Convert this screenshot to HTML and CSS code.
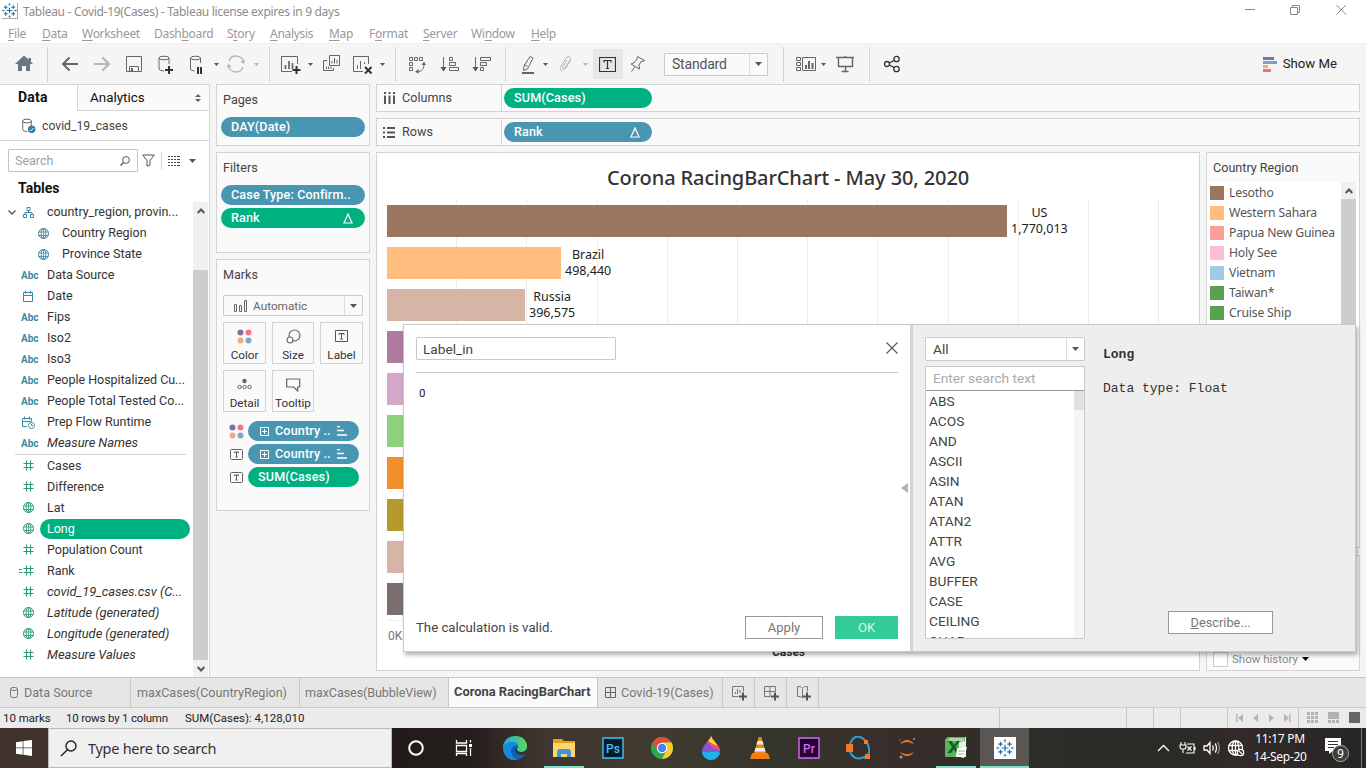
FILE: index.html
```html
<!DOCTYPE html>
<html lang="en">
<head>
<meta charset="utf-8">
<title>Tableau - Covid-19(Cases)</title>
<link rel="stylesheet" href="styles.css">
</head>
<body>
<svg class="defs" aria-hidden="true">
  <symbol id="globe" viewBox="0 0 13 13"><g fill="none" stroke="currentColor"><circle cx="6.5" cy="6.5" r="5"/><ellipse cx="6.5" cy="6.5" rx="2.3" ry="5"/><path d="M1.5 5h10M1.5 8.5h10M6.5 1.5v10" stroke-width=".8"/></g></symbol>
  <symbol id="hash" viewBox="0 0 13 13"><path d="M4.5 1.5v10M8.5 1.5v10M1.500 4.500h10M1.500 8.500h10" stroke="currentColor" stroke-width="1.1" fill="none"/></symbol>
  <symbol id="cal" viewBox="0 0 13 13"><path d="M1.500 2.500h9v9h-9zM1.500 5.500h9M3.500 .5v3M8.500 .5v3" stroke="currentColor" fill="none"/></symbol>
  <symbol id="tbox" viewBox="0 0 13 11"><rect x=".5" y=".5" width="12" height="10" rx="1" fill="none" stroke="#666"/><path d="M4.500 4V3h4v1M6.500 3v5M5.500 8h2" fill="none" stroke="#555"/></symbol>
  <symbol id="dots4" viewBox="0 0 15 15"><circle cx="3.500" cy="3.500" r="3" fill="#83709a"/><circle cx="11.500" cy="3.500" r="3" fill="#fa7286"/><circle cx="3.500" cy="11.500" r="3" fill="#f3a77b"/><circle cx="11.500" cy="11.500" r="3" fill="#83a4cc"/></symbol>
  <symbol id="delta" viewBox="0 0 10 11"><path d="M5 1L9 10H1z" fill="none" stroke="#fff" stroke-width="1.2"/></symbol>
  <symbol id="plusbox" viewBox="0 0 9 9"><path d="M.5.5h8v8h-8zM4.500 2v5M2 4.500h5" fill="none" stroke="#fff"/></symbol>
  <symbol id="sorted" viewBox="0 0 10 10"><path d="M0 .5h3M0 4.500h7M0 9h10" stroke="#fff" stroke-width="1.600" fill="none"/></symbol>
  <symbol id="caret" viewBox="0 0 7 4"><path d="M0 0h7L3.500 4z" fill="currentColor"/></symbol>
  <symbol id="tableau" viewBox="0 0 16 16"><g fill="none"><path d="M8 0v3M6.800 1.500h2.400M8 13v3M6.800 14.500h2.400M0 8h3M1.500 6.800v2.400M13 8h3M14.500 6.800v2.400" stroke="#5b97b8"/><path d="M4 2.500v4M2 4.500h4M12 2.500v4M10 4.500h4M4 9.500v4M2 11.500h4M12 9.500v4M10 11.500h4M8 5v6M5 8h6" stroke="#1f6ea8" stroke-width="1.100"/></g></symbol>
</svg>

<header class="titlebar">
  <svg class="app-icon" viewBox="0 0 16 16"><use href="#tableau"/></svg>
  <span class="app-title">Tableau - Covid-19(Cases) - Tableau license expires in 9 days</span>
  <svg class="winctl" width="110" height="12" viewBox="0 0 110 12" fill="none" stroke="#8a8a8a"><path d="M1 5.500h10M46.500 3.500h7v7h-7zM48.500 3.500v-2h7v7h-2M92.500 1l9.500 9.500M102 1l-9.500 9.500"/></svg>
</header>
<nav class="menu">
  <span><u>F</u>ile</span><span><u>D</u>ata</span><span><u>W</u>orksheet</span><span>Dash<u>b</u>oard</span><span>S<u>t</u>ory</span><span><u>A</u>nalysis</span><span><u>M</u>ap</span><span>F<u>o</u>rmat</span><span><u>S</u>erver</span><span>Wi<u>n</u>dow</span><span><u>H</u>elp</span>
</nav>

<div class="toolbar">
  <svg class="ic m12" viewBox="0 0 24 24"><path d="M12 3.500L3 12h3v7h4v-5h4v5h4v-7h3l-2-2V6h-2.500v1.600z" fill="#6b7684" stroke="none"/></svg>
  <i class="sep m11"></i>
  <svg class="ic m10" viewBox="0 0 24 24"><path d="M20 12H5M11.500 5.500L5 12l6.500 6.500" stroke-width="2"/></svg>
  <svg class="ic m8 dim" viewBox="0 0 24 24"><path d="M4 12h15M12.500 5.500L19 12l-6.500 6.500" stroke-width="2"/></svg>
  <svg class="ic m8" viewBox="0 0 24 24"><path d="M4.500 4.500h15v15h-15zM7.500 19.500v-5h9v5"/><path d="M9 16h2v3H9z" fill="#666" stroke="none"/></svg>
  <svg class="ic m7" viewBox="0 0 24 24"><ellipse cx="11" cy="6" rx="5" ry="1.800"/><path d="M6 6v11c0 1.200 2 1.800 5 1.800M16 6v6"/><path d="M16 14v8M12 18h8" stroke="#333" stroke-width="2"/></svg>
  <svg class="ic m8" viewBox="0 0 24 24"><ellipse cx="10.500" cy="6" rx="5" ry="1.800"/><path d="M5.500 6v11c0 1.200 2 1.800 4 1.800M15.500 6v5"/><path d="M13 15v7M16 15v7" stroke="#333" stroke-width="2"/></svg>
  <svg class="caret m4"><use href="#caret"/></svg>
  <svg class="ic m4 dim" viewBox="0 0 24 24"><path d="M5 9a7.500 7.500 0 0 1 14.500 1.500M19 15A7.500 7.500 0 0 1 4.500 13.500" stroke-width="1.300"/><path d="M20.500 7.500v4.500l-4-2zM3.500 16.500V12l4 2z" fill="#b5b5b5" stroke="none"/></svg>
  <svg class="caret m5 dim"><use href="#caret"/></svg>
  <i class="sep m9"></i>
  <svg class="ic m9" viewBox="0 0 24 24"><path d="M18.500 12V4.500h-16v15H13"/><path d="M6.500 13v4M10 9v8M13.500 11v6" stroke-width="1.700"/><path d="M17.500 14v8M13.500 18h8" stroke="#333" stroke-width="2"/></svg>
  <svg class="caret m4"><use href="#caret"/></svg>
  <svg class="ic m5" viewBox="0 0 24 24"><path d="M10.500 3.500h10v10h-10zM8 8.500H4.500v10h10V16M13 9v2.500M15.500 6v5.500M18 8v3.500M7.500 14.500V17M9.500 14.500V17M12 14.500V17" /></svg>
  <svg class="ic m7" viewBox="0 0 24 24"><path d="M18.500 12V4.500h-15v15H13M7.500 13v4M10.500 9v8M14.500 10v2"/><path d="M15 15l6.500 6.500M21.500 15L15 21.500" stroke="#333" stroke-width="2"/></svg>
  <svg class="caret m5"><use href="#caret"/></svg>
  <i class="sep m9"></i>
  <svg class="ic m9" viewBox="0 0 24 24"><path d="M4.500 5.500h3v3h-3zM9.500 5.500h3v3h-3zM14.500 5.500h3v3h-3zM4.500 10.500h3v3h-3zM4.500 15.500h3v3h-3zM19 12c0 5-2 7.500-7 8"/><path d="M16.500 13L19 9.500l2 3.500zM13.500 17l-3.500 2.700 3.500 2z" fill="#666" stroke="none"/></svg>
  <svg class="ic m9" viewBox="0 0 24 24"><path d="M5.500 5v13M11.500 5.500h3v3h-3zM11.500 10.500h6v3h-6zM11.500 15.500h9v3h-9z"/><path d="M2.500 15h6l-3 4.500z" fill="#555" stroke="none"/></svg>
  <svg class="ic m8" viewBox="0 0 24 24"><path d="M5.500 5v13M10.500 5.500h10v3h-10zM10.500 10.500h6v3h-6zM10.500 15.500h3v3h-3z"/><path d="M2.500 15h6l-3 4.500z" fill="#555" stroke="none"/></svg>
  <i class="sep m11"></i>
  <svg class="ic m10" viewBox="0 0 24 24"><path d="M14 4.500l3 1.500-5.500 11-4 1.500.5-4.500zM8.500 12.500l3 2"/><path d="M6 21h12" stroke-width="2"/></svg>
  <svg class="caret m2"><use href="#caret"/></svg>
  <svg class="ic m4 dim" viewBox="0 0 24 24"><path d="M17 8l-6 9.500c-1.500 2-5 .5-3.500-2.500l5.500-9c2-2.500 6-.5 4.500 2.500L12 17M14 8l-4 6.500c-1 1.500 0 2.500 1 1.500"/></svg>
  <svg class="caret m5 dim"><use href="#caret"/></svg>
  <span class="pressed m4"><svg width="17" height="15" viewBox="0 0 17 15"><path d="M.5.500h16v14H.5zM5 5.500v-2h7v2M8.500 3.500v8M7 11.500h3" fill="none" stroke="#333" stroke-width="1.200"/></svg></span>
  <svg class="ic m2" viewBox="0 0 24 24"><path d="M12.500 4.500l7 4-1.500 1-1.500-.5-2.500 4 .5 4-8.500-5 3.500-1.500L12 7zM10 14.500l-3.500 5"/></svg>
  <span class="select std m15"><b>Standard</b><em><svg class="caret"><use href="#caret"/></svg></em></span>
  <i class="sep m15"></i>
  <svg class="ic m10" viewBox="0 0 24 24"><path d="M2.500 5.500h4v3h-4zM2.500 10.500h4v3h-4zM2.500 15.500h4v3h-4zM8.500 5.500h13v13h-13z"/><path d="M12 13v4M15 9v8M18.500 11v6" stroke-width="2"/></svg>
  <svg class="caret m2"><use href="#caret"/></svg>
  <svg class="ic m6" viewBox="0 0 24 24"><path d="M3 5.500h18M5.500 5.500v9h14v-9M12 4v2M12.500 14.500v5M8.500 19.500h7" stroke-width="1.400"/></svg>
  <i class="sep m12"></i>
  <svg class="ic m10 dark" viewBox="0 0 24 24"><circle cx="7" cy="12" r="2.500"/><circle cx="16.500" cy="7" r="2.700"/><circle cx="16.500" cy="17" r="2.700"/><path d="M9.500 11l4.500-2.500M9.500 13l4.500 2.500"/></svg>
  <span class="showme"><svg width="14" height="15"><path d="M0 0h11v3H0z" fill="#83709a"/><path d="M0 4h14v3H0z" fill="#7f9fc9"/><path d="M0 8h5v3H0z" fill="#f3a77b"/><path d="M0 12h8v3H0z" fill="#fa6a80"/></svg>Show Me</span>
</div>

<main class="work">
  <aside class="data">
    <div class="dtabs"><b>Data</b><span>Analytics<svg width="6" height="8" viewBox="0 0 6 8"><path d="M3 0l3 3H0zM0 5h6L3 8z" fill="#56677a"/></svg></span></div>
    <div class="source"><svg width="14" height="16" viewBox="0 0 14 16"><g fill="none" stroke="#666"><ellipse cx="5" cy="3" rx="4.300" ry="1.900"/><path d="M.7 3v8.500c0 1.200 2 2 4.500 2M9.300 3v5"/></g><circle cx="9.700" cy="11.300" r="3.700" fill="#2e7d9e"/><path d="M8 11.500l1.300 1.300 2.300-2.800" stroke="#fff" fill="none"/></svg>covid_19_cases</div>
    <div class="find">
      <label>Search<svg width="10" height="10" viewBox="0 0 10 10" fill="none" stroke="#555"><circle cx="6" cy="4" r="3.400"/><path d="M3.500 6.500L.5 9.500" stroke-width="1.400"/></svg></label>
      <svg width="13" height="13" viewBox="0 0 13 13" fill="none" stroke="#555"><path d="M.7 1h11.600L8 6.500V11l-3 1.200V6.500z"/></svg>
      <i></i>
      <svg width="12" height="10" viewBox="0 0 12 10"><path d="M0 .5h12M0 3.500h12M0 6.500h12M0 9.500h12" stroke="#444" stroke-dasharray="2 1 2 1 2 1 3"/></svg>
      <svg class="caret"><use href="#caret"/></svg>
    </div>
    <h2>Tables</h2>
    <div class="treewrap">
      <div class="tree">
        <div class="row top"><svg class="chev" width="8" height="5" viewBox="0 0 8 5"><path d="M.5.500L4 4l3.500-3.500" fill="none" stroke="#555" stroke-width="1.400"/></svg><svg class="fi" viewBox="0 0 13 13"><path d="M5 1.500h3v3H5zM1.500 8.500h3v3h-3zM8.500 8.500h3v3h-3zM6.500 4.500v2M3 8V6.500h7V8" fill="none" stroke="currentColor"/></svg><span>country_region, provin...</span></div>
        <div class="row sub"><svg class="fi"><use href="#globe"/></svg><span>Country Region</span></div>
        <div class="row sub"><svg class="fi"><use href="#globe"/></svg><span>Province State</span></div>
        <div class="row"><b>Abc</b><span>Data Source</span></div>
        <div class="row"><svg class="fi"><use href="#cal"/></svg><span>Date</span></div>
        <div class="row"><b>Abc</b><span>Fips</span></div>
        <div class="row"><b>Abc</b><span>Iso2</span></div>
        <div class="row"><b>Abc</b><span>Iso3</span></div>
        <div class="row"><b>Abc</b><span>People Hospitalized Cu...</span></div>
        <div class="row"><b>Abc</b><span>People Total Tested Co...</span></div>
        <div class="row"><svg class="fi" viewBox="0 0 13 13"><path d="M5 10.500H.5v-8h9V5M.5 5.500h9M2.500 .5v3M7.500 .5v3" stroke="currentColor" fill="none"/><circle cx="9.500" cy="9.500" r="3" stroke="currentColor" fill="none"/><path d="M9.500 8v1.500H11" stroke="currentColor" fill="none"/></svg><span>Prep Flow Runtime</span></div>
        <div class="row it"><b>Abc</b><span>Measure Names</span></div>
        <hr>
        <div class="row g"><svg class="fi"><use href="#hash"/></svg><span>Cases</span></div>
        <div class="row g"><svg class="fi"><use href="#hash"/></svg><span>Difference</span></div>
        <div class="row g"><svg class="fi"><use href="#globe"/></svg><span>Lat</span></div>
        <div class="row g sel"><svg class="fi"><use href="#globe"/></svg><span>Long</span></div>
        <div class="row g"><svg class="fi"><use href="#hash"/></svg><span>Population Count</span></div>
        <div class="row g calc"><svg width="4" height="5"><path d="M0 1.500h3M0 4.500h3" stroke="#2f9b75"/></svg><svg class="fi"><use href="#hash"/></svg><span>Rank</span></div>
        <div class="row g it"><svg class="fi"><use href="#hash"/></svg><span>covid_19_cases.csv (C...</span></div>
        <div class="row g it"><svg class="fi"><use href="#globe"/></svg><span>Latitude (generated)</span></div>
        <div class="row g it"><svg class="fi"><use href="#globe"/></svg><span>Longitude (generated)</span></div>
        <div class="row g it"><svg class="fi"><use href="#hash"/></svg><span>Measure Values</span></div>
      </div>
      <div class="scroll"><svg width="8" height="6" viewBox="0 0 8 6"><path d="M.7 5L4 1.500 7.300 5" fill="none" stroke="#555" stroke-width="2"/></svg><i></i><svg width="8" height="6" viewBox="0 0 8 6"><path d="M.7 1L4 4.500 7.300 1" fill="none" stroke="#555" stroke-width="2"/></svg></div>
    </div>
  </aside>

  <section class="shelves">
    <div class="card pages"><h3>Pages</h3><div class="pill blue">DAY(Date)</div></div>
    <div class="card filters"><h3>Filters</h3><div class="pill blue">Case Type: Confirm..</div><div class="pill green">Rank<svg class="delta"><use href="#delta"/></svg></div></div>
    <div class="card marks"><h3>Marks</h3>
      <div class="select auto"><svg width="14" height="12" viewBox="0 0 14 12"><path d="M.5 4.500h2v7h-2zM5.500 5.500h2v6h-2zM10.500.5h2v11h-2z" fill="none" stroke="#666"/></svg><b>Automatic</b><em><svg class="caret"><use href="#caret"/></svg></em></div>
      <div class="mbtns">
        <span><svg width="15" height="15"><use href="#dots4"/></svg>Color</span>
        <span><svg width="15" height="15" viewBox="0 0 15 15" fill="#fafafa" stroke="#666" stroke-width="1.200"><circle cx="8.500" cy="6.500" r="5.500"/><circle cx="4" cy="11" r="3"/></svg>Size</span>
        <span><svg width="13" height="15" viewBox="0 0 13 15"><path d="M.5 1.500h12v11H.5zM4 6V4.500h5V6M6.500 4.500V10M5 10h3" fill="none" stroke="#555"/></svg>Label</span>
        <span><svg width="15" height="15" viewBox="0 0 15 15"><circle cx="7.500" cy="4" r="2.200" fill="#666"/><g fill="none" stroke="#666"><circle cx="2.500" cy="10" r="1.700"/><circle cx="7.500" cy="10" r="1.700"/><circle cx="12.500" cy="10" r="1.700"/></g></svg>Detail</span>
        <span><svg width="15" height="15" viewBox="0 0 15 15"><path d="M.7 2h13v8h-2v4l-4-4h-7z" fill="none" stroke="#666" stroke-width="1.200"/></svg>Tooltip</span>
      </div>
      <div class="mp"><svg width="15" height="15"><use href="#dots4"/></svg><div class="pill blue"><svg width="9" height="9"><use href="#plusbox"/></svg>Country ..<svg width="10" height="10" class="end"><use href="#sorted"/></svg></div></div>
      <div class="mp"><svg width="13" height="11"><use href="#tbox"/></svg><div class="pill blue"><svg width="9" height="9"><use href="#plusbox"/></svg>Country ..<svg width="10" height="10" class="end"><use href="#sorted"/></svg></div></div>
      <div class="mp"><svg width="13" height="11"><use href="#tbox"/></svg><div class="pill green">SUM(Cases)</div></div>
    </div>
  </section>

  <section class="canvas">
    <div class="card axis-shelf"><label><svg width="11" height="12"><path d="M1 0v2M1 3.500V12M5.500 0v2M5.500 3.500V12M10 0v2M10 3.500V12" stroke="#555" stroke-width="2"/></svg>Columns</label><div class="pill green">SUM(Cases)</div></div>
    <div class="card axis-shelf rows"><label><svg width="12" height="11"><path d="M0 1h2M4 1h8M0 5.500h2M4 5.500h8M0 10h2M4 10h8" stroke="#555" stroke-width="2"/></svg>Rows</label><div class="pill blue">Rank<svg class="delta"><use href="#delta"/></svg></div></div>
    <div class="viewrow">
      <div class="view">
        <h1>Corona RacingBarChart - May 30, 2020</h1>
        <div class="plot">
          <div class="bar"><i style="width:620px;background:#9c755f"></i><span>US<br>1,770,013</span></div>
          <div class="bar"><i style="width:174px;background:#ffbe7d"></i><span>Brazil<br>498,440</span></div>
          <div class="bar"><i style="width:138px;background:#d7b5a6"></i><span>Russia<br>396,575</span></div>
          <div class="bar"><i style="width:96px;background:#b07aa1"></i></div>
          <div class="bar"><i style="width:83px;background:#d4a6c8"></i></div>
          <div class="bar"><i style="width:82px;background:#8cd17d"></i></div>
          <div class="bar"><i style="width:66px;background:#f28e2b"></i></div>
          <div class="bar"><i style="width:65px;background:#b6992d"></i></div>
          <div class="bar"><i style="width:64px;background:#d7b5a6"></i></div>
          <div class="bar"><i style="width:57px;background:#79706e"></i></div>
        </div>
        <div class="tick">0K</div>
        <div class="axis-title">Cases</div>
      </div>
      <div class="side">
        <div class="card legend"><h3>Country Region</h3>
          <div class="lbody"><ul>
            <li><i style="background:#9c755f"></i>Lesotho</li><li><i style="background:#ffbe7d"></i>Western Sahara</li><li><i style="background:#ff9d9a"></i>Papua New Guinea</li><li><i style="background:#fabfd2"></i>Holy See</li><li><i style="background:#a0cbe8"></i>Vietnam</li><li><i style="background:#59a14f"></i>Taiwan*</li><li><i style="background:#59a14f"></i>Cruise Ship</li>
          </ul><div class="scroll"><svg width="8" height="6" viewBox="0 0 8 6"><path d="M.7 5L4 1.500 7.300 5" fill="none" stroke="#555" stroke-width="2"/></svg><i></i></div></div>
        </div>
        <div class="card history"><i></i>Show history<svg class="caret"><use href="#caret"/></svg></div>
      </div>
    </div>
  </section>
</main>

<nav class="sheets">
  <span class="s1"><svg width="9" height="12" viewBox="0 0 9 12" fill="none" stroke="#777"><rect x=".5" y=".5" width="7" height="10" rx="2"/><path d="M1 2.500c1 1.300 5 1.300 6 0"/></svg>Data Source</span>
  <span class="s2">maxCases(CountryRegion)</span>
  <span class="s3">maxCases(BubbleView)</span>
  <span class="s4">Corona RacingBarChart</span>
  <span class="s5"><svg width="11" height="11" viewBox="0 0 11 11"><path d="M.5.500h10v10H.5zM.5 5.500h10M5.500.5v10" fill="none" stroke="#666"/></svg>Covid-19(Cases)</span>
  <span class="add"><svg width="16" height="16" viewBox="0 0 16 16"><path d="M12.500 6.500v-5h-11v10h6M4.500 7v2M6.500 4v5M9 5v3" fill="none" stroke="#777"/><path d="M12 7.500v8M8 11.500h8" stroke="#555" stroke-width="2"/></svg></span>
  <span class="add"><svg width="16" height="16" viewBox="0 0 16 16"><path d="M12.500 6.500v-5h-11v10h6M1.500 6.500h11M7 1.500v10" fill="none" stroke="#777"/><path d="M12 7.500v8M8 11.500h8" stroke="#555" stroke-width="2"/></svg></span>
  <span class="add"><svg width="16" height="16" viewBox="0 0 16 16"><path d="M12.500 6.500v-5c-2 0-4 0-5 2-1-2-3-2-5-2v10c2 0 4 0 5 1.500v-9" fill="none" stroke="#777"/><path d="M12 7.500v8M8 11.500h8" stroke="#555" stroke-width="2"/></svg></span>
</nav>
<div class="status">
  <span class="st1">10 marks</span><span class="st2">10 rows by 1 column</span><span class="st3">SUM(Cases): 4,128,010</span>
  <i class="w127"></i><i class="w27"></i><i class="w27"></i><i class="w47"></i>
  <i class="nav"><svg width="55" height="8" viewBox="0 0 55 8" fill="#b5b5b5"><path d="M0 0h1.500v8H0zM7 0v8L2 4zM22 0v8l-5-4zM33 0v8l5-4zM48 0v8l5-4zM53 0h1.500v8H53z"/></svg></i>
  <i class="modes"><svg width="53" height="11" viewBox="0 0 53 11"><path d="M0 0h3v3H0zM4 0h3v3H4zM8 0h3v3H8zM0 4h3v3H0zM4 4h3v3H4zM8 4h3v3H8zM0 8h3v3H0zM4 8h3v3H4zM8 8h3v3H8zM21 0h11v7H21zM21 8h3v3h-3zM25 8h3v3h-3zM29 8h3v3h-3z" fill="#b3b3b3"/><path d="M42 0h11v11H42z" fill="#666"/></svg></i>
</div>

<footer class="taskbar">
  <div class="start"><svg width="16" height="16" viewBox="0 0 16 16"><path d="M0 2.200L6.700 1.200v6.300H0zM7.400 1.100L16 0v7.500H7.400zM0 8.300h6.700v6.500L0 13.800zM7.400 8.300H16V16l-8.600-1.200z" fill="#fff"/></svg></div>
  <div class="tsearch"><svg width="17" height="17" viewBox="0 0 17 17" fill="none" stroke="#222" stroke-width="1.400"><circle cx="11" cy="6" r="5"/><path d="M7.400 9.700L1 16"/></svg>Type here to search</div>
  <div class="apps">
    <span><svg width="24" height="24" viewBox="0 0 24 24"><circle cx="11" cy="12" r="6.800" fill="none" stroke="#fff" stroke-width="2"/></svg></span>
    <span><svg width="24" height="24" viewBox="0 0 24 24" fill="none" stroke="#fff" stroke-width="1.300"><path d="M2.500 4v3h10V4M2.500 9.500h10v6h-10zM2.500 20v-2.500h10V20M16.500 4v2.500M16.500 12v8"/><path d="M15 8h3v3h-3z" fill="#fff" stroke="none"/></svg></span>
    <span><svg width="24" height="24" viewBox="0 0 24 24"><defs><linearGradient id="eg" x1="0" x2="1"><stop offset="0" stop-color="#23a5df"/><stop offset="1" stop-color="#5ed957"/></linearGradient></defs><circle cx="12" cy="12" r="12" fill="#0b5fb4"/><path d="M0 12C0 4 6 0 12 0c8 0 12 5 12 10 0 4-3 6-6 6-3 0-4-1.500-4-2.500s1-1 1-3C15 8 12 6 9 6c-4 0-7 2-9 6z" fill="url(#eg)"/><path d="M0 12c1-4 5-6 9-6 4 0 6 2 6 4-4-1-7 1-7 5 0 4 3 7 7 9C6 26 0 19 0 12z" fill="#168bdb"/><path d="M11 11c-1 4 2 8 7 8 2 0 4-1 4.500-1.500-1 2.500-4 5.500-8 6C8 22 7 14 11 11z" fill="#0c63b7"/><path d="M14 13.500c0 1.500 1.500 2.500 4 2.500 3 0 4.500-1.200 5.300-2.500L24 16l-1.500 2c-4 2-10 1-11-5 1-1 2.500-.5 2.500.5z" fill="#3a3430"/></svg></span>
    <span class="run"><svg width="24" height="24" viewBox="0 0 24 24"><path d="M1 3h9l2 2h11v16H1z" fill="#e3a118"/><path d="M1 7h22v14H1z" fill="#ffd567"/><path d="M5 21v-6l2-2h10l2 2v6h-4v-3h-6v3z" fill="#3a96dd"/></svg></span>
    <span><svg width="24" height="24" viewBox="0 0 24 24"><path d="M2 2h20v20H2z" fill="#061a2c" stroke="#42c3f7" stroke-width="1.400"/><text x="12" y="16.500" text-anchor="middle" class="adobe" fill="#42c3f7">Ps</text></svg></span>
    <span><svg width="24" height="24" viewBox="0 0 24 24"><circle cx="12" cy="12" r="11" fill="#2da94f"/><path d="M2.500 6.500a11 11 0 0 1 19 0H12l-4 9z" fill="#e24a3d"/><path d="M12 6.500h9.500A11 11 0 0 1 12 23l4.500-8.500z" fill="#fdcb2f"/><circle cx="12" cy="12" r="5.200" fill="#fff"/><circle cx="12" cy="12" r="4.200" fill="#4285f4"/></svg></span>
    <span><svg width="24" height="24" viewBox="0 0 24 24"><path d="M12 0c2 5 9 9 9 15a9 9 0 0 1-18 0C3 9 10 6 12 0z" fill="#8056cf"/><path d="M12 0c1.500 4 5 6.500 7 10-3 0-6-2-10-5 1.500-1.500 2.500-3 3-5z" fill="#ffd52c"/><path d="M9 5c4 3 7 4 10 5 1 1 2 3 2 5-4-2-8-2-13-9z" fill="#f24c7c"/><path d="M3 15c6 4 12-2 18 2-1 4-5 7-9 7s-9-3-9-9z" fill="#1bb2ee"/></svg></span>
    <span><svg width="24" height="24" viewBox="0 0 24 24"><path d="M4 17h16l2 6H2z" fill="#f57a0c"/><path d="M10.800 1h2.400L18 17c-1 3-11 3-12 0z" fill="#f6870f"/><path d="M9.500 5h5l1 3.500h-7zM7.500 12h9l1 3.500h-11z" fill="#eee"/></svg></span>
    <span><svg width="24" height="24" viewBox="0 0 24 24"><path d="M2 2h20v20H2z" fill="#260033" stroke="#d56bf5" stroke-width="1.400"/><text x="12" y="16.500" text-anchor="middle" class="adobe" fill="#d56bf5">Pr</text></svg></span>
    <span><svg width="24" height="24" viewBox="0 0 24 24"><path d="M4 8C6 2 10 0 14 1c6 2 10 9 9 15-1 4-2 6-5 6M4 15c1 4 4 7 8 7.500 3 0 5-.5 7-2" fill="none" stroke="#2aa0cc" stroke-width="2"/><path d="M0 8h7v8H0zM18 4h4v4h-4zM19 18h5v5h-5z" fill="#f5782a"/></svg></span>
    <span><svg width="24" height="24" viewBox="0 0 24 24"><path d="M5 8.500c3-6 11-6 14 0-4-3.500-10-3.500-14 0zM5 15.500c3 6 11 6 14 0-4 3.500-10 3.500-14 0z" fill="#f37726"/><circle cx="19" cy="3" r="1.200" fill="#777"/><circle cx="6" cy="21" r="1.500" fill="#999"/><circle cx="5" cy="4" r=".8" fill="#777"/></svg></span>
    <span class="run"><svg width="24" height="24" viewBox="0 0 24 24"><path d="M4 1h18v20H1V4z" fill="#e3f3df"/><path d="M4 1h17v4l-6 1v12l-4 3H1V4z" fill="#58b55c"/><path d="M5 2h15v3H4z" fill="#a5dba2"/><path d="M4 5h4l2 4 3-4h3l-4.500 6 4.500 6h-4l-2-3.500L7 17H3.500L8 11z" fill="#165f27"/><path d="M13 12.500l10-1.500-3 11-8-2z" fill="#fff"/><path d="M14 15h7M14 18h6" stroke="#8cba8d"/></svg></span>
    <span class="run active"><svg width="24" height="24" viewBox="0 0 24 24"><path d="M1 1h22v22H1z" fill="#fff"/><use href="#tableau" x="3" y="3" width="18" height="18"/></svg></span>
  </div>
  <div class="tray">
    <svg width="110" height="20" viewBox="0 0 110 20" fill="none" stroke="#fff" stroke-width="1.300"><path d="M1 13l5.500-5.500L12 13"/><path d="M24 4v3M28 4v3M23 7h6v2c0 3-6 3-6 0zM26 11v4M30 6h7v9h-8M38 9v3M30.500 8.500l4 4M34.500 8.500l-4 4" stroke-width="1.100"/><path d="M47 8h3l3-3.500v11L50 12h-3zM55.500 7.500c1 1 1 4 0 5M58 5.500c2 2 2 7 0 9"/><path d="M60.500 4c2.500 3 2.500 9 0 12" stroke="#888"/><circle cx="78.500" cy="10" r="7"/><path d="M78.500 3v14M71.500 7.500h14M71.500 12.500h9"/><ellipse cx="78.500" cy="10" rx="3.300" ry="7"/><circle cx="83.500" cy="14.500" r="3.200" fill="#2b2b29"/><path d="M81.500 12.500l4 4"/></svg>
    <div class="clock">11:17 PM<br>14-Sep-20</div>
    <div class="notif"><svg width="25" height="25" viewBox="0 0 25 25"><path d="M0 0h16v13H8l-4 3v-3H0z" fill="#fff"/><path d="M3 3.500h10M3 6.500h10M3 9.500h6" stroke="#333"/><circle cx="15.500" cy="15.500" r="8" fill="#3c3c3a" stroke="#aaa"/><text x="15.500" y="20" text-anchor="middle" class="badge">9</text></svg></div>
  </div>
</footer>

<div class="dialog">
  <section class="editor">
    <div class="dhead"><span class="name">Label_in</span><svg width="12" height="12" viewBox="0 0 12 12"><path d="M.5.500l11 11M11.500.5l-11 11" stroke="#555" stroke-width="1.100"/></svg></div>
    <div class="code">0</div>
    <div class="dfoot"><span>The calculation is valid.</span><button class="apply">Apply</button><button class="ok">OK</button></div>
    <svg class="collapse" width="7" height="10"><path d="M7 0v10L0 5z" fill="#b3b3b3"/></svg>
  </section>
  <section class="help">
    <div class="funcs">
      <div class="select all"><b>All</b><em><svg class="caret"><use href="#caret"/></svg></em></div>
      <div class="fbox"><div class="fsearch">Enter search text</div>
      <div class="flist"><ul><li>ABS</li><li>ACOS</li><li>AND</li><li>ASCII</li><li>ASIN</li><li>ATAN</li><li>ATAN2</li><li>ATTR</li><li>AVG</li><li>BUFFER</li><li>CASE</li><li>CEILING</li><li>CHAR</li></ul><i><b></b></i></div></div>
    </div>
    <div class="desc"><b>Long</b><p>Data type: Float</p><button><u>D</u>escribe...</button></div>
  </section>
</div>
</body>
</html>
```
FILE: styles.css
```css
* { box-sizing: border-box; }
body { margin: 0; width: 1366px; height: 768px; overflow: hidden; position: relative; display: flex; flex-direction: column; background: #f5f5f5; color: #333; font: 13px/16px Roboto, "Open Sans", sans-serif; }
svg { flex: none; display: block; }
.defs { position: absolute; width: 0; height: 0; }
h1, h2, h3, p, ul { margin: 0; padding: 0; font-weight: 400; list-style: none; }
i, em { font-style: normal; }
b { font-weight: 400; }
ul { white-space: nowrap; }

.titlebar { height: 24px; background: #fff; display: flex; align-items: center; font: 12px/16px "Noto Sans", sans-serif; color: #8c8c8c; padding-left: 2px; }
.app-icon { width: 16px; height: 16px; border-right: 1px solid #aaa; border-bottom: 1px solid #aaa; margin-right: 5px; margin-top: -2px; }
.app-title { letter-spacing: -.3px; }
.winctl { margin-left: auto; margin-right: 12px; margin-top: -5px; }
.menu { height: 19px; background: #fff; display: grid; grid-template-columns: 34px 40px 72px 73px 43px 59px 40px 54px 48px 60px 60px; padding-left: 8px; font: 12px/19px "Noto Sans", sans-serif; color: #999; letter-spacing: -.3px; }
.menu u { text-underline-offset: 2px; }

.toolbar { height: 41px; border-top: 1px solid #eee; display: flex; align-items: center; background: #f5f5f5; }
.ic { width: 24px; height: 24px; fill: none; stroke: #666; stroke-width: 1; }
.ic.dim { stroke: #b5b5b5; }
.ic.dark { stroke: #333; stroke-width: 1.3; }
.caret { width: 7px; height: 4px; color: #555; }
.toolbar > .caret { padding: 0 1px; height: 3px; }
.caret.dim { color: #b5b5b5; }
.sep { width: 1px; height: 35px; background: #d4d4d4; align-self: flex-end; margin-bottom: 2px; }
.m2 { margin-left: 2px; } .m4 { margin-left: 4px; } .m5 { margin-left: 5px; } .m6 { margin-left: 6px; }
.m7 { margin-left: 7px; } .m8 { margin-left: 8px; } .m9 { margin-left: 9px; } .m10 { margin-left: 10px; }
.m11 { margin-left: 11px; } .m12 { margin-left: 12px; } .m15 { margin-left: 15px; }
.pressed { width: 30px; height: 30px; background: #e6e6e6; display: grid; place-items: center; padding-right: 1px; }
.select { display: flex; align-items: center; border: 1px solid #ccc; border-radius: 1px; background: #fafafa; }
.select b { flex: 1; }
.select em { align-self: stretch; border-left: 1px solid #ddd; display: flex; align-items: center; justify-content: center; width: 18px; }
.std { width: 104px; height: 23px; padding-left: 7px; font-size: 14px; letter-spacing: -.2px; color: #555; }
.showme { margin-left: auto; margin-right: 29px; display: flex; align-items: center; gap: 6px; font-size: 13.2px; color: #222; }

.work { height: 593px; display: flex; }
.data { width: 210px; border-right: 1px solid #d4d4d4; border-top: 1px solid #d4d4d4; background: #fff; display: flex; flex-direction: column; }
.dtabs { height: 26px; display: flex; font-size: 14px; line-height: 25px; color: #111; }
.dtabs > b { width: 77px; padding-left: 18px; font-weight: 700; letter-spacing: .2px; }
.dtabs > span { flex: 1; background: #fafafa; border-left: 1px solid #d4d4d4; border-bottom: 1px solid #d4d4d4; padding: 0 8px 0 12px; display: flex; justify-content: space-between; align-items: center; font-size: 13.4px; }
.source { height: 30px; border-bottom: 1px solid #d4d4d4; display: flex; align-items: center; gap: 6px; padding-left: 22px; color: #444; font-size: 12.2px; }
.find { display: flex; align-items: center; height: 23px; margin: 8px 0 0 8px; }
.find label { width: 130px; height: 23px; border: 1px solid #c4c4c4; border-radius: 1px; display: flex; align-items: center; justify-content: space-between; padding: 0 7px 0 6px; color: #a0a0a0; margin-right: 4px; font-size: 12.5px; }
.find i { width: 1px; height: 18px; background: #d4d4d4; margin: 0 6px; }
.find .caret { margin-left: 9px; }
h2 { font-size: 14px; line-height: 16px; font-weight: 700; color: #111; padding: 8px 0 0 18px; height: 30px; }
.treewrap { flex: 1; display: flex; }
.tree { width: 193px; font-size: 12.5px; }
.row { height: 21px; display: flex; align-items: center; padding: 0 0 1px 22px; white-space: nowrap; color: #333; letter-spacing: -.03px; }
.row.g { padding-bottom: 0; }
.row .fi { width: 13px; height: 13px; color: #3b89a5; margin-right: 12px; }
.row b { width: 25px; font-size: 10px; font-weight: 700; color: #3b89a5; line-height: 18px; padding-top: 2px; margin-left: -1px; margin-right: 1px; }
.row.top { padding-left: 8px; } .chev { margin-right: 6px; }
.row.sub { padding-left: 37px; }
.row.g .fi { color: #2f9b75; }
.row.it span { font-style: italic; font-size: 12.9px; }
.row.calc { padding-left: 19px; } .row.calc .fi { margin-left: -1px; }
.row.sel .fi { margin-right: 5px; }
.row.sel span { flex: 1; height: 20px; line-height: 20px; border-radius: 10px; background: #00b180; color: #fff; padding-left: 7px; margin-right: 3px; }
hr { border: 0; height: 1px; background: #d4d4d4; margin: 0 7px 0 15px; }
.scroll { width: 15px; background: #f0f0f0; display: flex; flex-direction: column; align-items: center; }
.scroll i { width: 15px; flex: 1; background: #cdcdcd; }
.treewrap .scroll { padding: 6px 0 5px; }
.treewrap .scroll i { margin: 56px 0 6px; }

.shelves { width: 154px; margin-left: 6px; display: flex; flex-direction: column; gap: 6px; }
.card { border: 1px solid #d4d4d4; background: #fafafa; }
h3 { font-size: 12.6px; line-height: 16px; color: #444; }
.shelves .card { padding: 7px 4px 0; }
.shelves h3 { padding-left: 2px; height: 25px; }
.pages { height: 62px; } .filters { height: 101px; } .marks { height: 252px; }
.pill { height: 20px; border-radius: 10px; color: #fff; font-size: 12.6px; font-weight: 500; line-height: 20px; padding: 0 12px 0 10px; display: flex; align-items: center; white-space: nowrap; margin-bottom: 3px; letter-spacing: .13px; }
.blue { background: #4996b2; } .green { background: #00b180; }
.delta { width: 10px; height: 11px; margin-left: auto; }
.shelves .marks { padding: 7px 6px 0; }
.marks h3 { height: 28px; padding-left: 0; }
.auto { height: 21px; padding-left: 10px; color: #666; font-size: 11.8px; } .auto b { padding-left: 5px; }
.mbtns { display: grid; grid-template-columns: 43px 42px 43px; gap: 6px; padding: 6px 0 9px; }
.mbtns span { height: 42px; border: 1px solid #d4d4d4; display: flex; flex-direction: column; align-items: center; justify-content: space-between; padding: 6px 0 1px; font-size: 11.7px; line-height: 14px; color: #333; }
.mp { display: grid; grid-template-columns: 25px 111px; align-items: center; height: 23px; }
.mp > svg { justify-self: center; margin: 0 0 3px 2px; }
.mp .pill { gap: 6px; }
.mp .pill:has(svg) { padding-left: 12px; }

.canvas { width: 984px; margin-left: 6px; display: flex; flex-direction: column; gap: 6px; }
.axis-shelf { height: 28px; display: flex; align-items: center; }
.axis-shelf label { width: 125px; height: 26px; border-right: 1px solid #d4d4d4; display: flex; align-items: center; gap: 7px; padding-left: 7px; color: #444; font-size: 12.6px; }
.axis-shelf.rows label { padding-left: 6px; }
.axis-shelf .pill { width: 148px; margin: 0 0 0 2px; }
.viewrow { height: 519px; display: flex; gap: 6px; }
.view { width: 824px; border: 1px solid #d4d4d4; background: #fff; padding-left: 10px; }
h1 { font: 500 20px/26px "Noto Sans", sans-serif; text-align: center; color: #333; height: 47px; padding: 12px 10px 0 0; letter-spacing: -.11px; }
.plot { width: 801px; height: 421px; border-bottom: 1px solid #eee; padding-top: 5px; background: repeating-linear-gradient(90deg, transparent 0 69.2px, #ededed 69.2px 70.2px); }
.bar { height: 42px; display: flex; align-items: flex-start; font: 12.5px/16px "Noto Sans", sans-serif; color: #222; }
.bar i { height: 32px; } .bar span { text-align: center; margin-left: 4px; }
.tick { font-size: 12px; color: #777; padding: 7px 0 0 1px; height: 22px; }
.axis-title { font-size: 12px; font-weight: 700; text-align: center; padding-right: 9px; line-height: 19px; }
.side { width: 154px; display: flex; flex-direction: column; gap: 7px; }
.legend { height: 396px; } .legend h3 { padding: 7px 6px; height: 29px; }
.lbody { display: flex; height: 365px; background: #fff; }
.lbody ul { width: 134px; } .lbody .scroll { margin-right: 2px; padding-top: 6px; } .lbody .scroll i { margin-top: 5px; }
.lbody li { height: 20px; display: flex; align-items: center; gap: 5px; padding: 1px 0 0 3px; font: 12.2px/16px "Noto Sans", sans-serif; color: #555; letter-spacing: -.17px; }
.lbody li i { width: 14px; height: 14px; }
.history { flex: 1; display: flex; align-items: flex-end; padding: 0 0 3px 6px; font-size: 11.5px; color: #888; }
.history i { width: 15px; height: 15px; border: 1px solid #ccc; background: #fff; margin-right: 4px; }
.history .caret { color: #000; margin: 0 0 6px 4px; }

.sheets { height: 31px; display: flex; background: #e6e6e6; border-top: 1px solid #c8c8c8; border-bottom: 1px solid #c8c8c8; line-height: 30px; color: #777; font-size: 12.6px; }
.sheets span { border-right: 1px solid #c8c8c8; white-space: nowrap; display: flex; align-items: center; }
.s1 { width: 131px; padding-left: 10px; gap: 5px; } .s2 { width: 169px; padding-left: 6px; } .s3 { width: 149px; padding-left: 5px; letter-spacing: -.1px; }
.sheets .s4 { width: 149px; padding-left: 5px; background: #fafafa; color: #444; font-weight: 700; padding-bottom: 2px; font-size: 12.9px; }
.s5 { width: 125px; padding-left: 7px; gap: 5px; }
.sheets .add { width: 32px; justify-content: center; }
.status { height: 20px; display: flex; background: #ebebeb; font-size: 11.5px; line-height: 20px; color: #222; }
.st1 { width: 63px; padding-left: 3px; } .st2 { width: 122px; padding-left: 3px; letter-spacing: -.2px; } .st3 { width: 814px; }
.status i { border-left: 1px solid #c8c8c8; }
.w127 { width: 127px; } .w27 { width: 27px; } .w47 { width: 47px; } .nav { width: 71px; padding: 6px 0 0 8px; } .modes { padding: 4px 0 0 8px; }

.taskbar { height: 40px; display: flex; background: linear-gradient(90deg, #41342e 0 48px, #211c1a 392px, #241e1d 470px, #403530 540px, #403b2f 650px, #35352c 780px, #392d2b 900px, #2c2d28 1050px, #292b26 1180px, #332a28 1240px, #262626 1366px); }
.start { width: 48px; flex: none; display: grid; place-items: center; }
.tsearch { width: 344px; flex: none; border: 1px solid #bbb; background: #f0f0f0; color: #333; font: 14.5px/38px "Noto Sans", sans-serif; display: flex; align-items: center; gap: 11px; padding-left: 11px; letter-spacing: -.28px; }
.apps { display: flex; flex: none; }
.apps span { width: 49px; display: flex; align-items: center; justify-content: center; }
.run { background: linear-gradient(#7be0cd, #7be0cd) bottom / 40px 2px no-repeat; }
.run.active { background-color: #595653; background-size: 49px 2px; }
.adobe { font: 500 12px Roboto, sans-serif; }
.tray { flex: none; width: 337px; display: flex; align-items: center; padding-left: 128px; color: #fff; }
.tray > svg { margin-right: -26px; }
.clock { width: 78px; text-align: center; font: 12px/18px "Noto Sans", sans-serif; letter-spacing: -.3px; }
.notif { padding: 4px 0 0 6px; border-right: 1px solid #777; height: 40px; width: 43px; display: flex; align-items: center; }
.badge { font: 12px "Noto Sans", sans-serif; fill: #fff; }

.dialog { position: absolute; left: 403px; top: 324px; width: 953px; height: 328px; display: flex; border: 1px solid #c8c8c8; box-shadow: 2px 3px 4px rgba(0,0,0,.3); background: #fff; }
.editor { width: 509px; flex: none; border-right: 3px solid #d4d4d4; padding: 12px; display: flex; flex-direction: column; position: relative; font-size: 13.2px; color: #444; }
.dhead { height: 36px; border-bottom: 1px solid #c8c8c8; display: flex; justify-content: space-between; width: 482px; }
.dhead svg { margin-top: 5px; }
.name { width: 200px; height: 23px; border: 1px solid #c8c8c8; border-radius: 1px; padding-left: 6px; line-height: 22px; font-size: 13.7px; }
.code { flex: 1; font-size: 11.5px; padding: 12px 3px; color: #222; }
.dfoot { display: flex; align-items: center; height: 23px; width: 482px; gap: 12px; } .dfoot span { flex: 1; }
button { font: 13px/20px Roboto, sans-serif; background: #fff; border: 1px solid #999; height: 23px; padding: 0; color: #777; }
.apply { width: 78px; } .ok { width: 63px; background: #33cc99; border: 0; color: #d9f5eb; }
.collapse { position: absolute; right: 2px; top: 158px; }
.help { flex: 1; background: #eee; display: flex; padding: 12px 0 0 12px; }
.funcs { width: 160px; font-size: 13.7px; color: #444; }
.all { height: 24px; background: #fff; padding-left: 7px; margin-bottom: 5px; }
.fbox { border: 1px solid #c8c8c8; border-radius: 1px; background: #fff; height: 273px; }
.fsearch { height: 24px; border-bottom: 1px solid #999; line-height: 23px; padding-left: 7px; color: #aaa; }
.flist { height: 247px; overflow: hidden; display: flex; justify-content: space-between; }
.flist li { height: 20px; line-height: 20px; padding-left: 3px; }
.flist > i { width: 10px; background: #f5f5f5; } .flist > i b { display: block; height: 19px; background: #e1e1e1; }
.desc { padding: 10px 0 0 18px; font: 13px/16px "Liberation Mono", monospace; color: #333; display: flex; flex-direction: column; flex: 1; }
.desc b { font-weight: 700; } .desc p { padding-top: 18px; height: 248px; }
.desc button { width: 105px; margin-left: 65px; font-size: 12.8px; }
```
